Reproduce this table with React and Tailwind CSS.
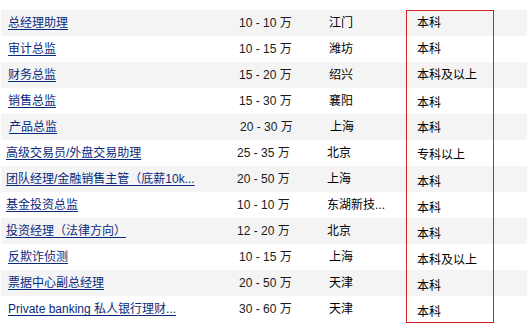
import React from 'react';

const rows = [
    { title: '总经理助理', pay: '10 - 10 万', city: '江门', edu: '本科', shift: 'ml-0', eduPad: '-mt-px' },
    { title: '审计总监', pay: '10 - 15 万', city: '潍坊', edu: '本科', shift: 'ml-0', eduPad: 'pt-0' },
    { title: '财务总监', pay: '15 - 20 万', city: '绍兴', edu: '本科及以上', shift: 'ml-0', eduPad: 'pt-0' },
    { title: '销售总监', pay: '15 - 30 万', city: '襄阳', edu: '本科', shift: 'ml-0', eduPad: 'pt-[2px]' },
    { title: '产品总监', pay: '20 - 30 万', city: '上海', edu: '本科', shift: 'ml-[1px]', eduPad: 'pt-[1px]' },
    { title: '高级交易员/外盘交易助理', pay: '25 - 35 万', city: '北京', edu: '专科以上', shift: '-ml-[2px]', eduPad: 'pt-[2px]' },
    { title: '团队经理/金融销售主管（底薪10k...', pay: '20 - 50 万', city: '上海', edu: '本科', shift: '-ml-[2px]', eduPad: 'pt-[3px]' },
    { title: '基金投资总监', pay: '10 - 10 万', city: '东湖新技...', edu: '本科', shift: '-ml-[2px]', eduPad: 'pt-[3px]' },
    { title: '投资经理（法律方向）', pay: '12 - 20 万', city: '北京', edu: '本科', shift: '-ml-[2px]', eduPad: 'pt-[3px]' },
    { title: '反欺诈侦测', pay: '10 - 15 万', city: '上海', edu: '本科及以上', shift: 'ml-0', eduPad: 'pt-[3px]' },
    { title: '票据中心副总经理', pay: '20 - 50 万', city: '天津', edu: '本科', shift: 'ml-0', eduPad: 'pt-[3px]' },
    { title: 'Private banking 私人银行理财...', pay: '30 - 60 万', city: '天津', edu: '本科', shift: 'ml-0', eduPad: 'pt-[3px]' },
];

const App = () => {
    return (
        <div
            className="w-[527px] h-[331px] bg-white pt-[10px] text-[12px] overflow-hidden"
            style={{ fontFamily: '"Liberation Sans", "Noto Sans CJK SC", sans-serif' }}
        >
            {rows.map((r, i) => {
                const last = i === rows.length - 1;
                return (
                    <div
                        key={i}
                        className={`flex h-[26px] ml-px ${i % 2 === 0 ? 'bg-[#f4f4f4]' : 'bg-white'}`}
                    >
                        <div className={`flex ${r.shift}`}>
                            <div className="w-[238px] pl-[7px] leading-[26px]">
                                <a href="#" className="text-[#0a2a7c] underline underline-offset-[2px] whitespace-nowrap">
                                    {r.title}
                                </a>
                            </div>
                            <div className="w-[90px] leading-[26px] text-[#1a1a1a] whitespace-nowrap">{r.pay}</div>
                            <div className="w-[77px] leading-[26px] text-black whitespace-nowrap">{r.city}</div>
                        </div>
                        <div
                            className={`w-[88px] shrink-0 border-x border-[#d42020] pl-[10px] text-black ${i === 0 ? 'border-t' : ''} ${last ? 'border-b h-[27px]' : ''} ${r.shift === 'ml-0' ? '' : r.shift === 'ml-[1px]' ? '-ml-[1px]' : 'ml-[2px]'}`}
                        >
                            <div className={`leading-[26px] whitespace-nowrap ${r.eduPad}`}>{r.edu}</div>
                        </div>
                    </div>
                );
            })}
        </div>
    );
};

export default App;
